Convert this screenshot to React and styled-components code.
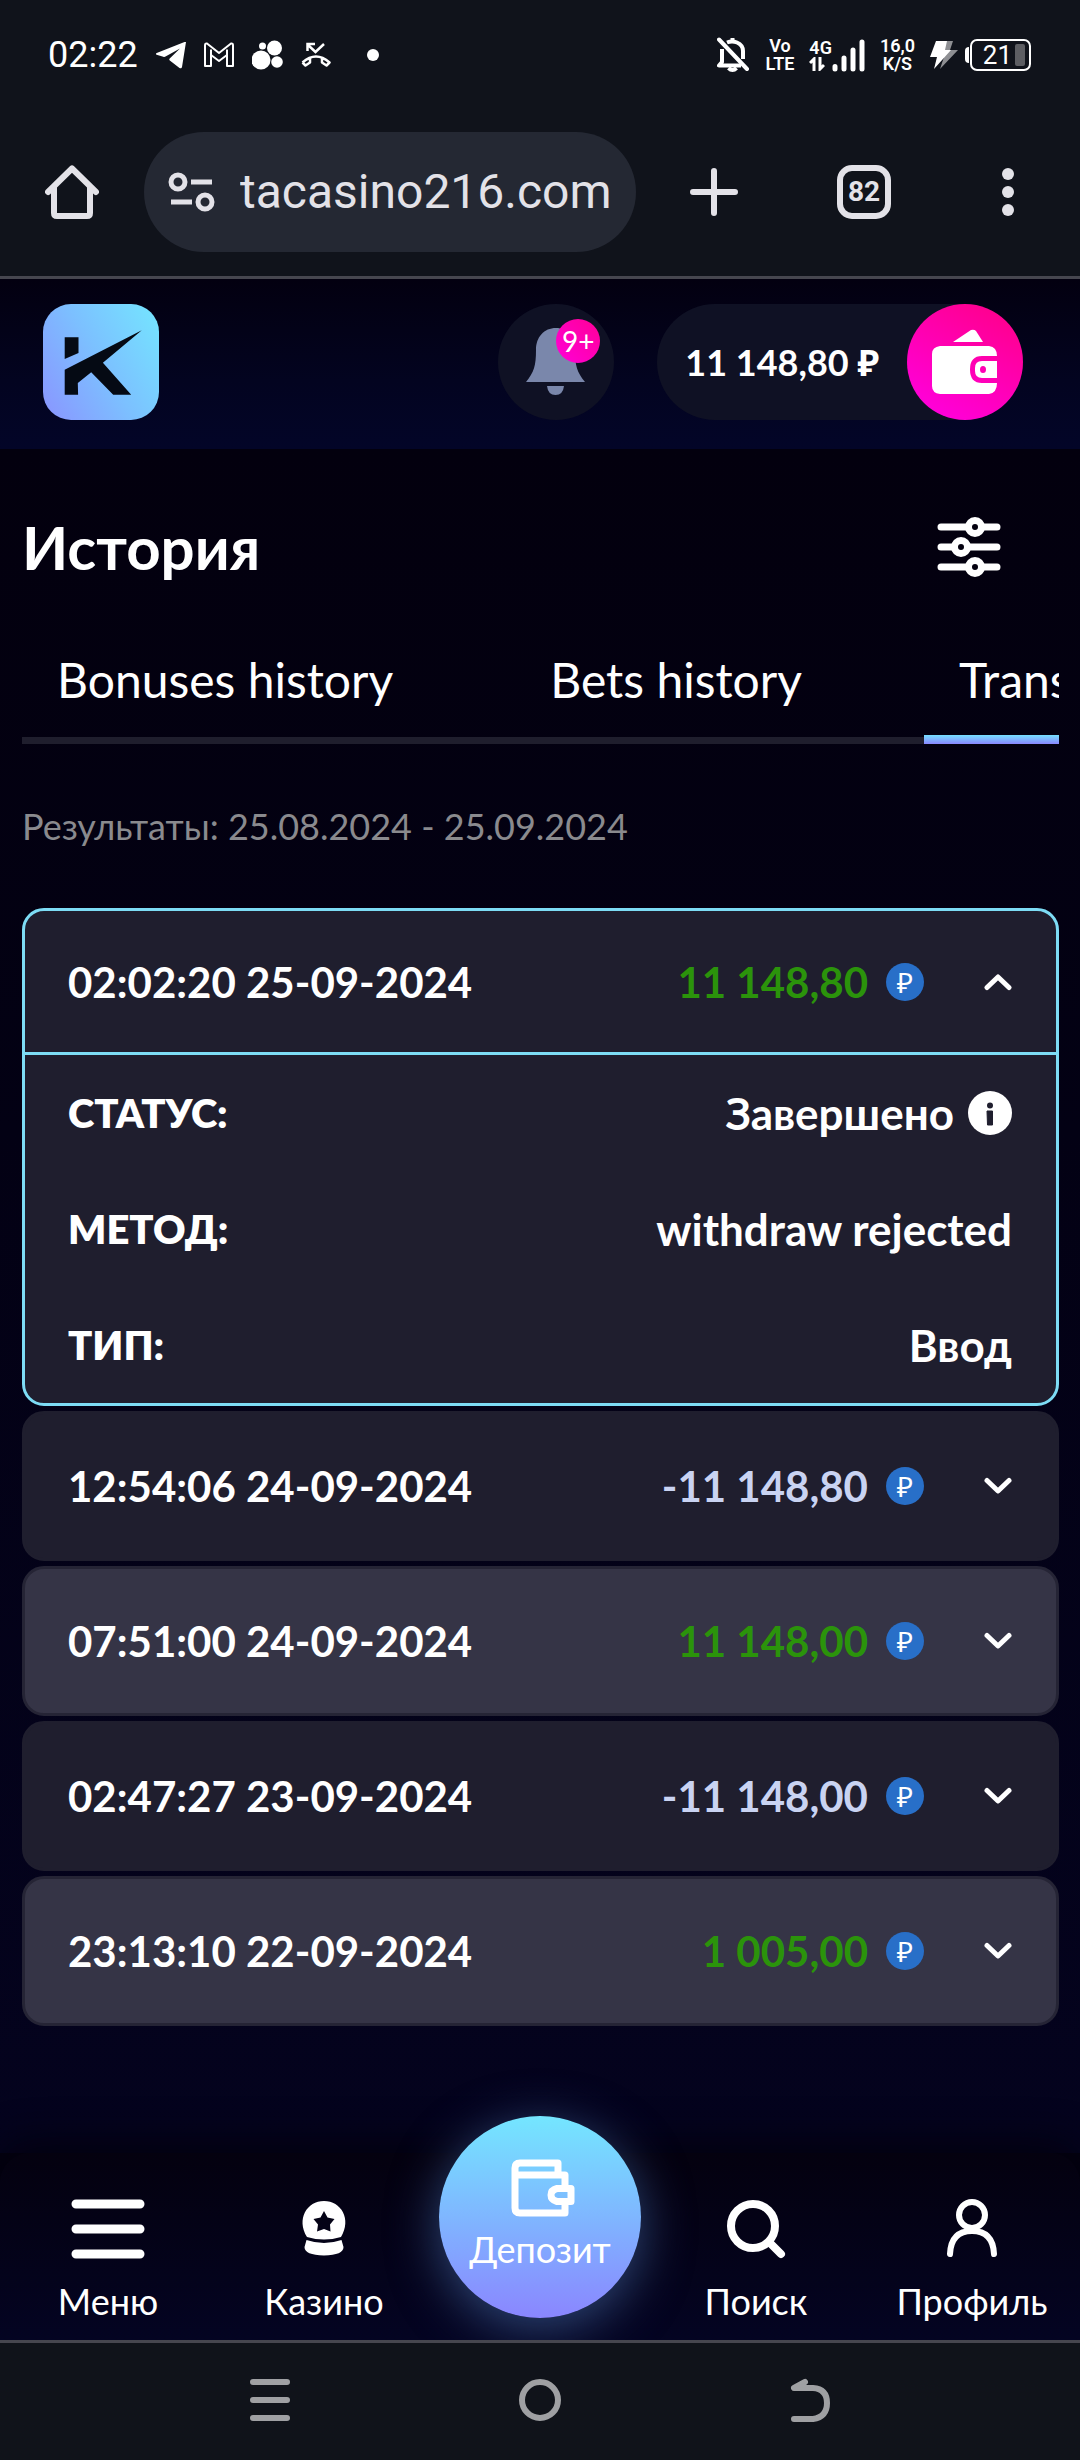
import React, { useState } from "react";
import styled, { createGlobalStyle, css } from "styled-components";

const operations = [
  {
    id: 1,
    date: "02:02:20 25-09-2024",
    amount: "11 148,80",
    income: true,
    status: "Завершено",
    method: "withdraw rejected",
    type: "Ввод",
  },
  {
    id: 2,
    date: "12:54:06 24-09-2024",
    amount: "-11 148,80",
    income: false,
    status: "Завершено",
    method: "withdraw",
    type: "Вывод",
  },
  {
    id: 3,
    date: "07:51:00 24-09-2024",
    amount: "11 148,00",
    income: true,
    status: "Завершено",
    method: "withdraw rejected",
    type: "Ввод",
  },
  {
    id: 4,
    date: "02:47:27 23-09-2024",
    amount: "-11 148,00",
    income: false,
    status: "Завершено",
    method: "withdraw",
    type: "Вывод",
  },
  {
    id: 5,
    date: "23:13:10 22-09-2024",
    amount: "1 005,00",
    income: true,
    status: "Завершено",
    method: "deposit",
    type: "Ввод",
  },
];

const tabs = ["Bonuses history", "Bets history", "Transactions history"];

const StatusBar = () => (
  <StatusWrapper>
    <StatusGroup $gap={18}>
      <Time>02:22</Time>
      <svg width="30" height="28" viewBox="0 0 30 28" fill="#fff">
        <path d="M30 1 26 26c-.3 1.300-1.400 1.600-2.500.900l-9.700-7.500c-.7-.6-.7-1.200-.1-1.800L24 7.500 9.500 15.500c-.8.5-1.400.5-2.200.200L.6 13.800c-1-.4-.8-1.300.1-1.700L28.500 1z" />
      </svg>
      <svg width="30" height="26" viewBox="0 0 30 26" fill="none" stroke="#fff" strokeWidth="2">
        <path
          strokeLinejoin="round"
          d="M1 24V3.500Q1 1 3 1.500L15 11 27 1.500Q29 1 29 3.500V24H23V13L15 19 7 13V24Z"
        />
        <path d="M7 13V7.500M23 13V7.500" />
      </svg>
      <svg width="31" height="30" viewBox="0 0 31 30" fill="#fff">
        <circle cx="9" cy="20" r="9.500" />
        <circle cx="22.500" cy="8" r="7.500" />
        <circle cx="10.500" cy="6" r="3.500" />
        <circle cx="25" cy="22" r="5.800" />
      </svg>
      <svg width="30" height="26" viewBox="0 0 30 26" fill="none" stroke="#fff" strokeWidth="2.500">
        <path d="M23 2 14.500 10 7 3M6.500 9V2H14" />
        <path
          strokeLinejoin="round"
          d="M1.500 20.500Q15 8.500 28.500 20.500L25.500 23.500 21 20.500V15.500M1.500 20.500 4.500 23.500 9 20.500V15.500"
        />
      </svg>
      <svg width="48" height="30" viewBox="0 0 48 30" fill="#fff">
        <circle cx="24" cy="15" r="6" />
      </svg>
    </StatusGroup>
    <StatusGroup $gap={15}>
      <svg width="34" height="36" viewBox="0 0 34 36" fill="none" stroke="#fff" strokeWidth="4">
        <path d="M5 12V25L2 28.500H24M10 5.500Q15 3.500 20 5.500 26 8 26 14V22" strokeLinejoin="round" />
        <path d="M2 2.500 30 32" strokeLinecap="round" />
        <path d="M15.500 4V1M11.500 31Q15.500 35 19.500 31" />
      </svg>
      <Stack>
        <span>Vo</span>
        <span>LTE</span>
      </Stack>
      <Mobile>
        <Stack>
          <span>4G</span>
          <svg width="16" height="14" viewBox="0 0 16 14" fill="none" stroke="#fff" strokeWidth="3">
            <path d="M5 14V2L1 6M11 0V12L15 8" />
          </svg>
        </Stack>
        <svg width="33" height="33" viewBox="0 0 33 33" stroke="#fff" strokeWidth="5" strokeLinecap="round">
          <path d="M3 27.500V30M12 19V30M21 11V30M30 3V30" />
        </svg>
      </Mobile>
      <Stack>
        <span>16,0</span>
        <span>K/S</span>
      </Stack>
      <BatteryBox>
        <svg width="29" height="30" viewBox="0 0 29 30">
          <path d="M14 1H23L20 10H28L10 29 14 17H9Z" fill="#8e8f93" />
          <path d="M6 1H17L15 10H21L4 29 7 17H0Z" fill="#fff" />
        </svg>
        <BatteryCap />
        <Battery>
          21
          <BatteryLevel />
        </Battery>
      </BatteryBox>
    </StatusGroup>
  </StatusWrapper>
);

const BrowserBar = () => (
  <BrowserWrapper>
    <IconButton aria-label="Home">
      <svg width="54" height="54" viewBox="0 0 54 54" fill="none" stroke="#e3e2e8" strokeWidth="6">
        <path
          d="M3 27 27 3.500 51 27M9 22V48Q9 51 12 51H42Q45 51 45 48V22"
          strokeLinecap="round"
          strokeLinejoin="round"
        />
      </svg>
    </IconButton>
    <AddressBar>
      <svg width="48" height="40" viewBox="0 0 48 40" fill="none" stroke="#e3e2e8" strokeWidth="5">
        <circle cx="10" cy="10" r="7" />
        <circle cx="37" cy="30" r="7" />
        <path d="M23 10H44M3 30H24" />
      </svg>
      <AddressInput aria-label="Address" defaultValue="tacasino216.com" />
    </AddressBar>
    <BrowserActions>
      <IconButton aria-label="New tab">
        <svg width="48" height="48" viewBox="0 0 48 48" stroke="#e3e2e8" strokeWidth="6" strokeLinecap="round">
          <path d="M24 3V45M3 24H45" />
        </svg>
      </IconButton>
      <TabsButton aria-label="Open tabs">82</TabsButton>
      <IconButton aria-label="More">
        <svg width="36" height="48" viewBox="0 0 36 48" fill="#e3e2e8">
          <circle cx="18" cy="6" r="6" />
          <circle cx="18" cy="24" r="6" />
          <circle cx="18" cy="42" r="6" />
        </svg>
      </IconButton>
    </BrowserActions>
  </BrowserWrapper>
);

const SiteHeader = () => (
  <HeaderWrapper>
    <LogoLink href="#" aria-label="Главная">
      <svg width="116" height="116" viewBox="0 0 116 116" fill="#050a14">
        <path d="M21.700 33.300H35.500V49L21.700 55ZM21.700 65.700 98.800 26.300 59.900 58.700 88.200 90.700H70.200L48.200 68.300 34.800 79 35.100 90.700H21.700Z" />
      </svg>
    </LogoLink>
    <HeaderRight>
      <BellButton aria-label="Уведомления">
        <svg width="60" height="68" viewBox="0 0 60 68" fill="#7a87ab">
          <path d="M30 0C18 0 10 9 10 22 10 38 8 44 0 54H59C51 44 49 38 49 22 49 9 41 0 30 0Z" />
          <path d="M21 58H38Q37 67 29.500 67 22 67 21 58Z" />
        </svg>
        <Badge>9+</Badge>
      </BellButton>
      <Balance>
        <BalanceValue>11 148,80 ₽</BalanceValue>
        <WalletButton aria-label="Кошелёк">
          <svg width="66" height="66" viewBox="0 0 66 66" fill="#fff">
            <path d="M21 13 39 1Q42 0 44 2L51 13Z" />
            <path d="M8 17H57Q65 18 65 27H50Q38 27 38 40.500 38 54 50 54H65Q65 64 57 65H8Q0 64 0 57V25Q0 18 8 17Z" />
            <path
              fillRule="evenodd"
              d="M50 32H65V49H50Q43 49 43 42V39Q43 32 50 32ZM51 37A3 3.500 0 1 0 51 44 3 3.500 0 1 0 51 37Z"
            />
          </svg>
        </WalletButton>
      </Balance>
    </HeaderRight>
  </HeaderWrapper>
);

const Operation = ({ item, opened, onToggle }) => (
  <Card $opened={opened}>
    <CardHeader $opened={opened} aria-expanded={opened} onClick={onToggle}>
      <span>{item.date}</span>
      <CardRight>
        <Amount $income={item.income}>{item.amount}</Amount>
        <Coin>₽</Coin>
        <Chevron $opened={opened} width="28" height="18" viewBox="0 0 28 18">
          <path d="M3 3.500 14 14 25 3.500" />
        </Chevron>
      </CardRight>
    </CardHeader>
    {opened && (
      <Details>
        <DetailRow>
          <DetailName>Статус:</DetailName>
          <DetailValue>
            {item.status}
            <svg width="44" height="44" viewBox="0 0 44 44">
              <circle cx="22" cy="22" r="22" fill="#fff" />
              <circle cx="22" cy="14.500" r="3" fill="#1f1e2e" />
              <path d="M19 20H24.500V34H19.500Z" fill="#1f1e2e" stroke="#1f1e2e" strokeLinejoin="round" />
            </svg>
          </DetailValue>
        </DetailRow>
        <DetailRow>
          <DetailName>Метод:</DetailName>
          <DetailValue>{item.method}</DetailValue>
        </DetailRow>
        <DetailRow>
          <DetailName>Тип:</DetailName>
          <DetailValue>{item.type}</DetailValue>
        </DetailRow>
      </Details>
    )}
  </Card>
);

const BottomMenu = () => (
  <BottomNav>
    <NavLink href="#menu">
      <NavIcon width="74" height="60" viewBox="0 0 74 60" stroke="#fff" strokeWidth="9" strokeLinecap="round">
        <path d="M5 5H69M5 30H69M5 55H69" />
      </NavIcon>
      Меню
    </NavLink>
    <NavLink href="#casino">
      <NavIcon width="44" height="60" viewBox="0 0 44 60" fill="#fff">
        <path
          fillRule="evenodd"
          d="M5 38C-6 20 5 2 22 2S50 20 39 38Q22 43 5 38ZM22 12 18.500 18.500 11.500 20 16 25.500 15 32.500 22 30 28.500 32.500 28 25.500 32.500 20 25.500 18.500Z"
        />
        <path d="M4.500 41Q22 47 39.500 41L41.500 48Q41.500 56 22 56.500 2.500 56 2.500 48Z" />
      </NavIcon>
      Казино
    </NavLink>
    <NavCenter>
      <DepositLink href="#deposit">
        <svg width="72" height="60" viewBox="-6 0 72 60" fill="none" stroke="#fff" strokeWidth="7" strokeLinejoin="round">
          <path d="M5 17V10Q5 5 10 5H48V17M5 16V50Q5 55 10 55H55V46M55 28V17H6" />
          <path d="M61 30.500H47Q41 32 41 37 41 42 47 43.500H61Z" />
        </svg>
        Депозит
      </DepositLink>
    </NavCenter>
    <NavLink href="#search">
      <NavIcon width="60" height="60" viewBox="0 0 60 60" fill="none" stroke="#fff" strokeWidth="8" strokeLinecap="round">
        <circle cx="27" cy="27" r="22" />
        <path d="M44 44 55 55" />
      </NavIcon>
      Поиск
    </NavLink>
    <NavLink href="#profile">
      <NavIcon width="54" height="60" viewBox="0 0 54 60" fill="none" stroke="#fff" strokeWidth="6" strokeLinecap="round">
        <circle cx="27" cy="16" r="13" />
        <path d="M5 55Q6 32 27 32T49 55" />
      </NavIcon>
      Профиль
    </NavLink>
  </BottomNav>
);

const SystemBar = () => (
  <SystemWrapper>
    <IconButton aria-label="Recent apps">
      <svg width="42" height="44" viewBox="0 0 42 44" stroke="#9fa0a3" strokeWidth="6" strokeLinecap="round">
        <path d="M4 4H38M4 22H38M4 40H38" />
      </svg>
    </IconButton>
    <IconButton aria-label="Home screen">
      <svg width="42" height="42" viewBox="0 0 42 42" fill="none" stroke="#9fa0a3" strokeWidth="6">
        <circle cx="21" cy="21" r="18" />
      </svg>
    </IconButton>
    <IconButton aria-label="Back">
      <svg
        width="42"
        height="44"
        viewBox="0 0 42 44"
        fill="none"
        stroke="#9fa0a3"
        strokeWidth="6"
        strokeLinecap="round"
        strokeLinejoin="round"
      >
        <path d="M16 4 5 10H24Q38 11 38 25T24 41H5" />
      </svg>
    </IconButton>
  </SystemWrapper>
);

const App = () => {
  const [openedId, setOpenedId] = useState(1);
  const [activeTab, setActiveTab] = useState(tabs[2]);

  const toggleHandler = (id) => () => {
    setOpenedId(openedId === id ? null : id);
  };

  return (
    <Page>
      <GlobalStyle />
      <StatusBar />
      <BrowserBar />
      <SiteHeader />
      <Main>
        <TitleRow>
          <Title>История</Title>
          <IconButton aria-label="Фильтр">
            <svg width="64" height="62" viewBox="0 0 64 62" fill="none" stroke="#fff" strokeWidth="7">
              <path d="M4 11H30M46 11H60M4 31H17M33 31H60M4 51H30M46 51H60" strokeLinecap="round" />
              <circle cx="38" cy="11" r="6.500" />
              <circle cx="24" cy="31" r="6.500" />
              <circle cx="38" cy="51" r="6.500" />
            </svg>
          </IconButton>
        </TitleRow>
        <TabList role="tablist">
          {tabs.map((name) => (
            <Tab
              key={name}
              role="tab"
              aria-selected={name === activeTab}
              $active={name === activeTab}
              onClick={() => setActiveTab(name)}
            >
              {name}
            </Tab>
          ))}
        </TabList>
        <Period>Результаты: 25.08.2024 - 25.09.2024</Period>
        <List>
          {operations.map((item) => (
            <Operation
              key={item.id}
              item={item}
              opened={item.id === openedId}
              onToggle={toggleHandler(item.id)}
            />
          ))}
        </List>
      </Main>
      <BottomMenu />
      <SystemBar />
    </Page>
  );
};

const GlobalStyle = createGlobalStyle`
  * {
    box-sizing: border-box;
  }
  body {
    margin: 0;
    background: #030110;
    color: #fff;
    font-family: Lato, "Noto Sans", sans-serif;
  }
  button, input {
    font: inherit;
    color: inherit;
    border: none;
    background: none;
    padding: 0;
  }
  button {
    cursor: pointer;
  }
  a {
    color: inherit;
    text-decoration: none;
  }
  svg {
    display: block;
    flex-shrink: 0;
  }
`;

const Page = styled.div`
  min-height: 100vh;
  display: flex;
  flex-direction: column;
`;

const StatusWrapper = styled.div`
  height: 110px;
  padding: 0 49px 0 48px;
  display: flex;
  align-items: center;
  justify-content: space-between;
  background: #10131b;
  font-family: Roboto, sans-serif;
`;

const StatusGroup = styled.div`
  display: flex;
  align-items: center;
  gap: ${({ $gap }) => $gap}px;
`;

const Time = styled.span`
  font-size: 36px;
  line-height: 40px;
`;

const Stack = styled.div`
  display: flex;
  flex-direction: column;
  font-size: 18px;
  font-weight: 600;
  line-height: 18px;
  text-align: center;
`;

const Mobile = styled.div`
  display: flex;
  align-items: center;
`;

const BatteryBox = styled.div`
  display: flex;
  align-items: center;
`;

const BatteryCap = styled.span`
  width: 4px;
  height: 16px;
  margin: 0 1px 0 6px;
  border-radius: 4px 0 0 4px;
  background: #fff;
`;

const Battery = styled.div`
  display: flex;
  align-items: center;
  justify-content: flex-end;
  gap: 3px;
  width: 61px;
  height: 32px;
  padding-right: 4px;
  border: 2px solid #fff;
  border-radius: 7px;
  font-size: 26px;
  line-height: 28px;
`;

const BatteryLevel = styled.span`
  width: 10px;
  height: 22px;
  border-radius: 2px;
  background: #5d5e63;
`;

const BrowserWrapper = styled.div`
  display: flex;
  align-items: center;
  padding: 22px 54px 24px 45px;
  background: #10131b;
  border-bottom: 3px solid #46464f;
  font-family: Roboto, sans-serif;
  color: #e3e2e8;
`;

const IconButton = styled.button`
  display: flex;
  align-items: center;
  justify-content: center;
`;

const AddressBar = styled.label`
  flex: 1;
  min-width: 0;
  display: flex;
  align-items: center;
  gap: 24px;
  height: 120px;
  margin: 0 54px 0 45px;
  padding: 0 20px 0 24px;
  border-radius: 60px;
  background: #242833;
`;

const AddressInput = styled.input`
  flex: 1;
  min-width: 0;
  font-size: 48px;
  line-height: 60px;
  outline: none;
`;

const BrowserActions = styled.div`
  display: flex;
  align-items: center;
  gap: 99px;
`;

const TabsButton = styled.button`
  width: 54px;
  height: 54px;
  border: 6px solid #e3e2e8;
  border-radius: 15px;
  font-size: 28px;
  font-weight: 700;
  line-height: 42px;
`;

const HeaderWrapper = styled.header`
  display: flex;
  align-items: center;
  justify-content: space-between;
  padding: 25px 57px 29px 43px;
  background: linear-gradient(180deg, #030010 0%, #030420 60%, #030528 100%);
`;

const LogoLink = styled.a`
  border-radius: 28px;
  background: linear-gradient(60deg, #8a94ff 0%, #7cc0ff 50%, #74e6ff 100%);
`;

const HeaderRight = styled.div`
  display: flex;
  align-items: center;
  gap: 43px;
`;

const BellButton = styled.button`
  position: relative;
  display: flex;
  align-items: center;
  justify-content: center;
  width: 116px;
  height: 116px;
  border-radius: 50%;
  background: #0f1124;
`;

const Badge = styled.span`
  position: absolute;
  top: 15px;
  right: 14px;
  width: 44px;
  height: 44px;
  border-radius: 50%;
  background: linear-gradient(45deg, #ff00d8, #ff0096);
  font-size: 28px;
  line-height: 44px;
  text-align: center;
`;

const Balance = styled.div`
  display: flex;
  align-items: center;
  gap: 28px;
  padding-left: 28px;
  border-radius: 58px;
  background: #0f1124;
`;

const BalanceValue = styled.span`
  font-size: 36px;
  font-weight: 700;
  line-height: 48px;
  white-space: nowrap;
`;

const WalletButton = styled.button`
  display: flex;
  align-items: center;
  justify-content: center;
  width: 116px;
  height: 116px;
  border-radius: 50%;
  background: linear-gradient(30deg, #ff00e5, #ff0084);
`;

const Main = styled.main`
  flex: 1;
  padding: 60px 21px 124px 22px;
  background: linear-gradient(180deg, #03000e 0%, #030114 40%, #04031e 100%);
`;

const TitleRow = styled.div`
  display: flex;
  align-items: center;
  justify-content: space-between;
  height: 76px;
  padding-right: 58px;
`;

const Title = styled.h1`
  margin: 0;
  font-size: 60px;
  font-weight: 700;
  line-height: 72px;
`;

const TabList = styled.div`
  display: flex;
  gap: 87px;
  margin-top: 65px;
  overflow: hidden;
  box-shadow: inset 0 -7px 0 #1f1e2d;
`;

const Tab = styled.button`
  flex-shrink: 0;
  padding: 0 35px 34px;
  font-size: 48px;
  line-height: 60px;
  white-space: nowrap;
  ${({ $active }) =>
    $active &&
    css`
      background: linear-gradient(180deg, #75e0ff, #8a86ff) no-repeat bottom / 100% 9px;
    `}
`;

const Period = styled.p`
  margin: 58px 0;
  font-size: 36px;
  line-height: 48px;
  color: #8a8a8e;
`;

const List = styled.ul`
  display: flex;
  flex-direction: column;
  gap: 5px;
  margin: 0;
  padding: 0;
  list-style: none;
`;

const Card = styled.li`
  border: 3px solid #1f1e2e;
  border-radius: 22px;
  background: #1f1e2e;
  font-size: 42px;
  line-height: 60px;
  &:nth-child(odd) {
    border-color: #252435;
    background: #353446;
  }
  ${({ $opened }) =>
    $opened &&
    css`
      &&:nth-child(n) {
        border-color: #7ddcf5;
        background: #1f1e2e;
      }
    `}
`;

const CardHeader = styled.button`
  display: flex;
  align-items: center;
  justify-content: space-between;
  width: 100%;
  height: 144px;
  padding: 0 44px 0 43px;
  font-weight: 700;
  border-bottom: ${({ $opened }) => ($opened ? "3px solid #7ddcf5" : "none")};
`;

const CardRight = styled.span`
  display: flex;
  align-items: center;
`;

const Amount = styled.span`
  color: ${({ $income }) => ($income ? "#2b930b" : "#c9d3f2")};
`;

const Coin = styled.span`
  width: 38px;
  height: 38px;
  margin: 0 60px 0 18px;
  border-radius: 50%;
  background: #286fc8;
  font-family: "Noto Sans", sans-serif;
  font-size: 28px;
  font-weight: 400;
  line-height: 38px;
  text-align: center;
`;

const Chevron = styled.svg`
  fill: none;
  stroke: #fff;
  stroke-width: 5;
  stroke-linecap: round;
  stroke-linejoin: round;
  transform: ${({ $opened }) => ($opened ? "rotate(180deg)" : "none")};
`;

const Details = styled.dl`
  margin: 0;
  padding: 0 44px 0 43px;
`;

const DetailRow = styled.div`
  display: flex;
  align-items: center;
  justify-content: space-between;
  height: 116px;
`;

const DetailName = styled.dt`
  font-size: 40px;
  font-weight: 800;
  text-transform: uppercase;
`;

const DetailValue = styled.dd`
  display: flex;
  align-items: center;
  gap: 14px;
  margin: 0;
  font-size: 44px;
  font-weight: 700;
`;

const BottomNav = styled.nav`
  position: relative;
  display: grid;
  grid-template-columns: repeat(5, 1fr);
  height: 187px;
  border-radius: 30px 30px 0 0;
  background: linear-gradient(180deg, #04010f, #040422);
  box-shadow: 0 -8px 40px #03010d;
  font-size: 36px;
  line-height: 48px;
`;

const NavLink = styled.a`
  display: flex;
  flex-direction: column;
  align-items: center;
  gap: 18px;
  padding-top: 46px;
`;

const NavIcon = styled.svg`
  overflow: visible;
`;

const NavCenter = styled.div`
  display: flex;
  justify-content: center;
`;

const DepositLink = styled.a`
  flex-shrink: 0;
  display: flex;
  flex-direction: column;
  align-items: center;
  width: 202px;
  height: 202px;
  margin-top: -37px;
  padding-top: 42px;
  gap: 7px;
  border-radius: 50%;
  background: linear-gradient(180deg, #74e6ff, #8a86ff);
  box-shadow: 0 10px 50px #2f4878;
`;

const SystemWrapper = styled.div`
  position: relative;
  display: grid;
  grid-template-columns: repeat(3, 270px);
  justify-content: center;
  align-items: center;
  height: 120px;
  padding-bottom: 3px;
  background: #10131a;
  border-top: 3px solid #46464f;
`;

export default App;
